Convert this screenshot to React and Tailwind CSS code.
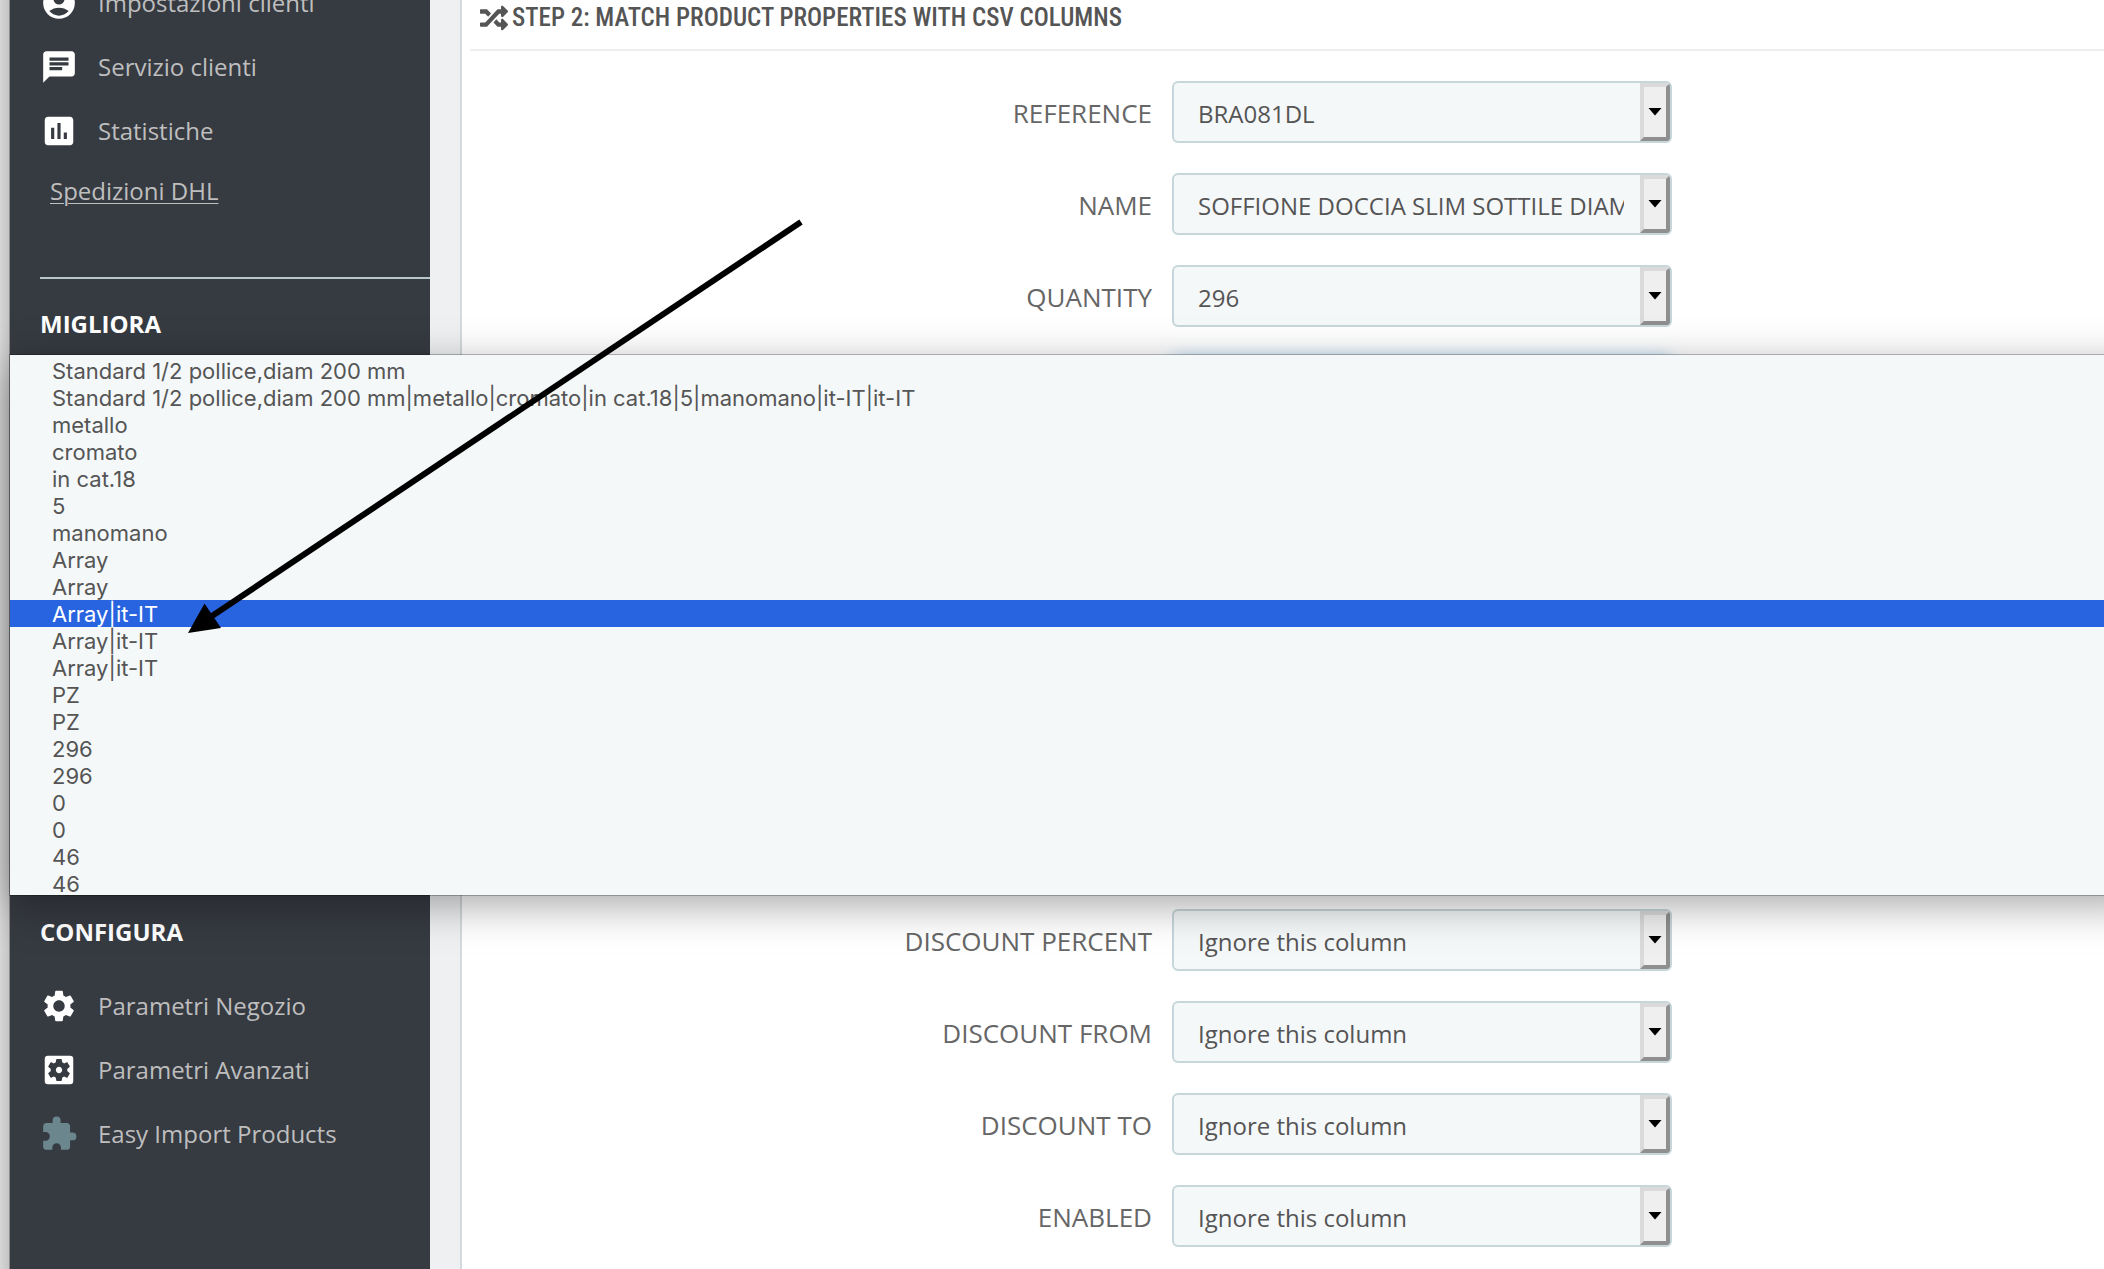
import React, { useState } from 'react';
import {
    MdAccountCircle,
    MdAssessment,
    MdChat,
    MdExtension,
    MdSettings,
    MdSettingsApplications,
} from 'react-icons/md';
import { FaRandom } from 'react-icons/fa';

const topFields = [
    { id: 'reference', label: 'REFERENCE', value: 'BRA081DL' },
    { id: 'name', label: 'NAME', value: 'SOFFIONE DOCCIA SLIM SOTTILE DIAM 200' },
    { id: 'quantity', label: 'QUANTITY', value: '296' },
];

const bottomFields = [
    { id: 'discount-percent', label: 'DISCOUNT PERCENT', value: 'Ignore this column' },
    { id: 'discount-from', label: 'DISCOUNT FROM', value: 'Ignore this column' },
    { id: 'discount-to', label: 'DISCOUNT TO', value: 'Ignore this column' },
    { id: 'enabled', label: 'ENABLED', value: 'Ignore this column' },
];

const options = [
    'Standard 1/2 pollice,diam 200 mm',
    'Standard 1/2 pollice,diam 200 mm|metallo|cromato|in cat.18|5|manomano|it-IT|it-IT',
    'metallo',
    'cromato',
    'in cat.18',
    '5',
    'manomano',
    'Array',
    'Array',
    'Array|it-IT',
    'Array|it-IT',
    'Array|it-IT',
    'PZ',
    'PZ',
    '296',
    '296',
    '0',
    '0',
    '46',
    '46',
];

const NavItem = ({ icon: Icon, iconClass = 'text-white', children }) => (
    <li>
        <a href="#" className="flex h-16 items-center gap-5 pl-[30px] text-[#bebebe] hover:text-white">
            <Icon className={`size-[38px] shrink-0 ${iconClass}`} />
            <span className="whitespace-nowrap">{children}</span>
        </a>
    </li>
);

const Sidebar = () => (
    <nav className="w-[420px] shrink-0 overflow-hidden bg-[#363a41] text-2xl">
        <ul className="-mt-[29px]">
            <NavItem icon={MdAccountCircle}>Impostazioni clienti</NavItem>
            <NavItem icon={MdChat}>Servizio clienti</NavItem>
            <NavItem icon={MdAssessment}>Statistiche</NavItem>
        </ul>
        <a href="#" className="ml-10 mt-3 inline-block text-[#bebebe] underline decoration-1 underline-offset-3">
            Spedizioni DHL
        </a>

        <div className="ml-[30px] mt-[70px] border-t-2 border-[#b9c7cb]" />
        <h2 className="ml-[30px] mt-[29px] font-bold text-white">MIGLIORA</h2>

        <h2 className="ml-[30px] mt-[576px] font-bold text-white">CONFIGURA</h2>
        <ul className="mt-[26px]">
            <NavItem icon={MdSettings}>Parametri Negozio</NavItem>
            <NavItem icon={MdSettingsApplications}>Parametri Avanzati</NavItem>
            <NavItem icon={MdExtension} iconClass="text-[#6c868e]">Easy Import Products</NavItem>
        </ul>
    </nav>
);

const ColumnSelect = ({ focused, value, ...props }) => (
    <div className="relative">
        <select
            {...props}
            className={`h-[62px] w-full appearance-none rounded-md border-2 bg-[#f5f8f9] pl-6 pr-[46px] pt-[3px] text-2xl text-[#555] outline-none ${
                focused ? 'border-[#66afe9] shadow-[0_0_16px_rgba(102,175,233,0.6)]' : 'border-[#c7d6db]'
            }`}
        >
            <option>{value}</option>
        </select>
        <span
            aria-hidden="true"
            className="pointer-events-none absolute inset-y-0.5 right-0.5 flex w-[30px] items-center justify-center rounded-r border-4 border-b-[#8f8f8f] border-l-[#dadada] border-r-[#8f8f8f] border-t-[#dadada] bg-[#efefef]"
        >
            <svg className="h-2 w-3.5" viewBox="0 0 14 8">
                <path d="M0.500 0h13L7 7.500z" fill="#000" />
            </svg>
        </span>
    </div>
);

const Field = ({ id, label, value }) => (
    <div className="grid grid-cols-[710fr_500fr_432fr] items-center">
        <label htmlFor={id} className="pr-5 pt-0.5 text-right text-[26px] leading-8 text-[#666]">
            {label}
        </label>
        <ColumnSelect id={id} value={value} />
    </div>
);

const OptionsMenu = () => {
    const [active, setActive] = useState(9);

    return (
        <ul
            role="listbox"
            aria-label="CSV columns"
            className="absolute -right-10 left-2.5 top-[355px] h-[540px] overflow-hidden bg-[#f4f8f9] pt-0.5 font-['Inter',sans-serif] text-[22px] leading-[25px] text-[#555] shadow-[0_0_0_1px_rgba(0,0,0,0.25),0_10px_40px_rgba(0,0,0,0.35)]"
        >
            {options.map((option, index) => (
                <li
                    key={index}
                    role="option"
                    aria-selected={index === active}
                    onMouseEnter={() => setActive(index)}
                    className={`whitespace-nowrap pl-[42px] pt-0.5 ${index === active ? 'bg-[#2863e0] text-white' : ''}`}
                >
                    {option}
                </li>
            ))}
        </ul>
    );
};

// Arrow pointing at the broken entries
const Arrow = () => (
    <svg
        className="pointer-events-none absolute left-[180px] top-[210px] h-[430px] w-[630px]"
        viewBox="180 210 630 430"
        aria-hidden="true"
    >
        <path d="M801 222 212 616" stroke="#000" strokeWidth="6" />
        <path d="M188 633 204.500 603.500 221 628z" fill="#000" />
    </svg>
);

const App = () => {
    return (
        <div className="relative flex min-h-screen overflow-hidden bg-[#eff0f2] font-['Open_Sans',sans-serif]">
            <div className="w-2.5 shrink-0 border-r border-[#8c8c8c] bg-linear-to-r from-[#d6d6d6] to-[#c4c4c4]" />
            <Sidebar />

            <main className="ml-[30px] min-w-0 flex-1 border-l-2 border-[#d3d9dc] bg-white">
                <h1 className="ml-2 flex h-[51px] items-start gap-1 border-b-2 border-[#eee] pl-2.5 pt-0.5 font-['Roboto_Condensed','Liberation_Sans_Narrow',sans-serif] text-[25px] font-medium leading-8 text-[#555]">
                    <FaRandom className="mt-0.5 size-7" />
                    STEP 2: MATCH PRODUCT PROPERTIES WITH CSV COLUMNS
                </h1>

                <form className="flex flex-col gap-[30px] pt-[30px]">
                    {topFields.map((field) => (
                        <Field key={field.id} {...field} />
                    ))}
                    <div className="mb-[460px] grid grid-cols-[710fr_500fr_432fr]">
                        <div className="col-start-2">
                            <ColumnSelect focused aria-label="CSV column" value="" />
                        </div>
                    </div>
                    {bottomFields.map((field) => (
                        <Field key={field.id} {...field} />
                    ))}
                </form>
            </main>

            <OptionsMenu />
            <Arrow />
        </div>
    );
};

export default App;
